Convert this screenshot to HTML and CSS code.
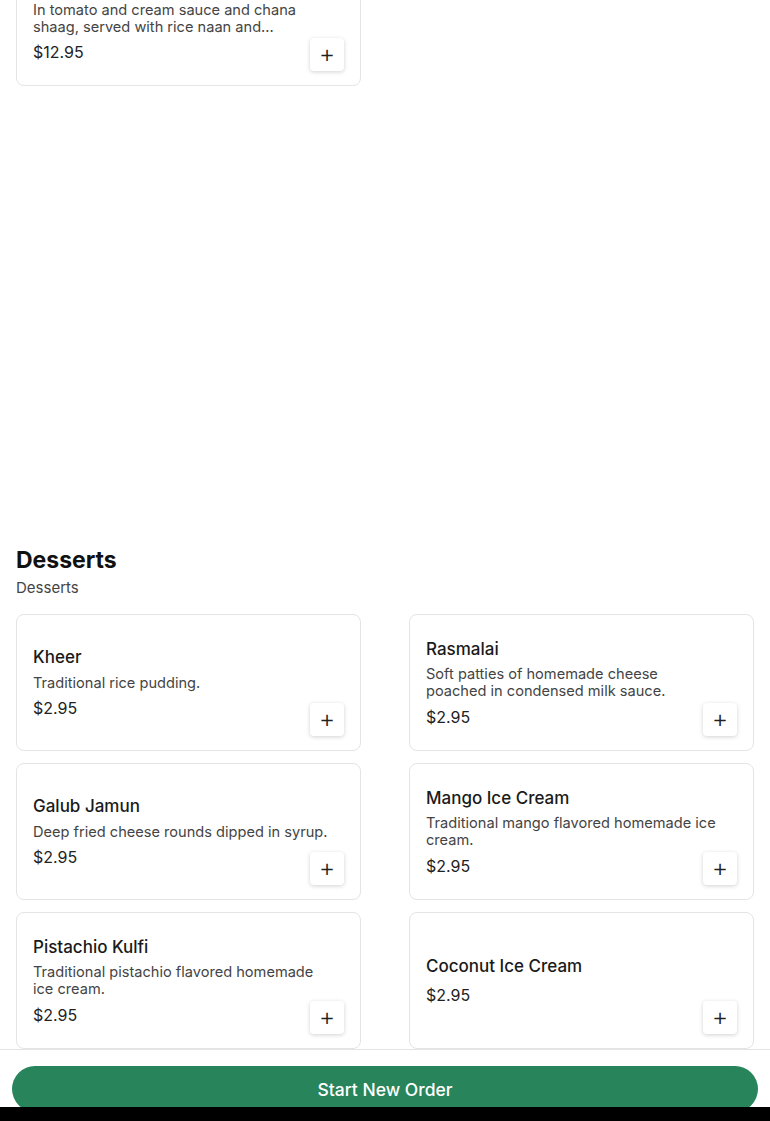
FILE: index.html
```html
<!DOCTYPE html>
<html>
<head>
<meta charset="utf-8">
<link rel="stylesheet" href="styles.css">
</head>
<body>
<main class="page">
  <section class="section section-top">
    <div class="grid">
      <div class="card card-top">
        <div class="info">
          <div class="title">Chana Saag Paneer</div>
          <div class="desc">In tomato and cream sauce and chana shaag, served with rice naan and...</div>
          <div class="price">$12.95</div>
        </div>
        <button class="add" aria-label="Add">+</button>
      </div>
    </div>
  </section>

  <section class="section">
    <h2 class="sec-title">Desserts</h2>
    <p class="sec-sub">Desserts</p>
    <div class="grid">
      <div class="card">
        <div class="info">
          <div class="title">Kheer</div>
          <div class="desc">Traditional rice pudding.</div>
          <div class="price">$2.95</div>
        </div>
        <button class="add" aria-label="Add">+</button>
      </div>
      <div class="card">
        <div class="info">
          <div class="title">Rasmalai</div>
          <div class="desc">Soft patties of homemade cheese poached in condensed milk sauce.</div>
          <div class="price">$2.95</div>
        </div>
        <button class="add" aria-label="Add">+</button>
      </div>
      <div class="card">
        <div class="info">
          <div class="title">Galub Jamun</div>
          <div class="desc">Deep fried cheese rounds dipped in syrup.</div>
          <div class="price">$2.95</div>
        </div>
        <button class="add" aria-label="Add">+</button>
      </div>
      <div class="card">
        <div class="info">
          <div class="title">Mango Ice Cream</div>
          <div class="desc">Traditional mango flavored homemade ice cream.</div>
          <div class="price">$2.95</div>
        </div>
        <button class="add" aria-label="Add">+</button>
      </div>
      <div class="card">
        <div class="info">
          <div class="title">Pistachio Kulfi</div>
          <div class="desc">Traditional pistachio flavored homemade ice cream.</div>
          <div class="price">$2.95</div>
        </div>
        <button class="add" aria-label="Add">+</button>
      </div>
      <div class="card">
        <div class="info">
          <div class="title">Coconut Ice Cream</div>
          <div class="price">$2.95</div>
        </div>
        <button class="add" aria-label="Add">+</button>
      </div>
    </div>
  </section>
</main>

<footer class="bottom-bar">
  <div class="bar-inner">
    <button class="order-btn">Start New Order</button>
  </div>
  <div class="system-strip"></div>
</footer>
</body>
</html>
```

FILE: styles.css
```css
* { box-sizing: border-box; }
html, body { margin: 0; padding: 0; background: #fff; }
body {
  font-family: "Inter", "Open Sans", sans-serif;
  color: #1c1c1c;
  overflow: hidden;
  height: 1121px;
}
.page {
  padding: 0 16px;
}
.section-top {
  margin-top: -51px;
  margin-bottom: 459px;
}
.grid {
  display: grid;
  grid-template-columns: 345px 345px;
  column-gap: 48px;
  row-gap: 12px;
}
.card {
  height: 137px;
  border: 1px solid #e4e4e4;
  border-radius: 8px;
  background: #fff;
  display: flex;
  align-items: center;
  position: relative;
  padding: 0 16px;
}
.info {
  flex: 0 1 295px;
}
.title {
  font-size: 17px;
  font-weight: 500;
  color: #1a1a1a;
  line-height: 22px;
  margin-bottom: 6.5px;
}
.desc {
  font-size: 14.6px;
  color: #444;
  line-height: 17px;
  margin-bottom: 5.5px;
}
.card-top .desc { overflow: hidden; }
.card-top .info { padding-top: 1px; }
.price {
  font-size: 16px;
  color: #222;
  line-height: 22px;
}
.add {
  position: absolute;
  right: 16px;
  bottom: 14px;
  width: 34px;
  height: 33px;
  border: none;
  border-radius: 4px;
  background: #fff;
  box-shadow: 0 1px 4px rgba(0,0,0,0.18);
  font-family: "DejaVu Sans", sans-serif;
  font-size: 18px;
  line-height: 33px;
  color: #222;
  padding: 0;
}
.sec-title {
  margin: 0;
  font-family: "Inter", "Roboto", sans-serif;
  font-size: 23px;
  font-weight: 700;
  line-height: 30px;
  color: #111;
}
.sec-sub {
  margin: 2px 0 15px;
  font-size: 15px;
  color: #444;
  line-height: 22px;
}
.bottom-bar {
  position: fixed;
  left: 0;
  right: 0;
  bottom: 0;
  background: #fff;
  border-top: 1px solid #e4e4e4;
}
.bar-inner {
  padding: 16px 12px 0;
  height: 57px;
  overflow: hidden;
}
.order-btn {
  width: 100%;
  height: 46px;
  border: none;
  border-radius: 23px;
  background: #27845b;
  color: #fff;
  font-family: "Inter", sans-serif;
  font-size: 17.5px;
  font-weight: 500;
}
.system-strip {
  height: 14px;
  background: #000;
}
```
